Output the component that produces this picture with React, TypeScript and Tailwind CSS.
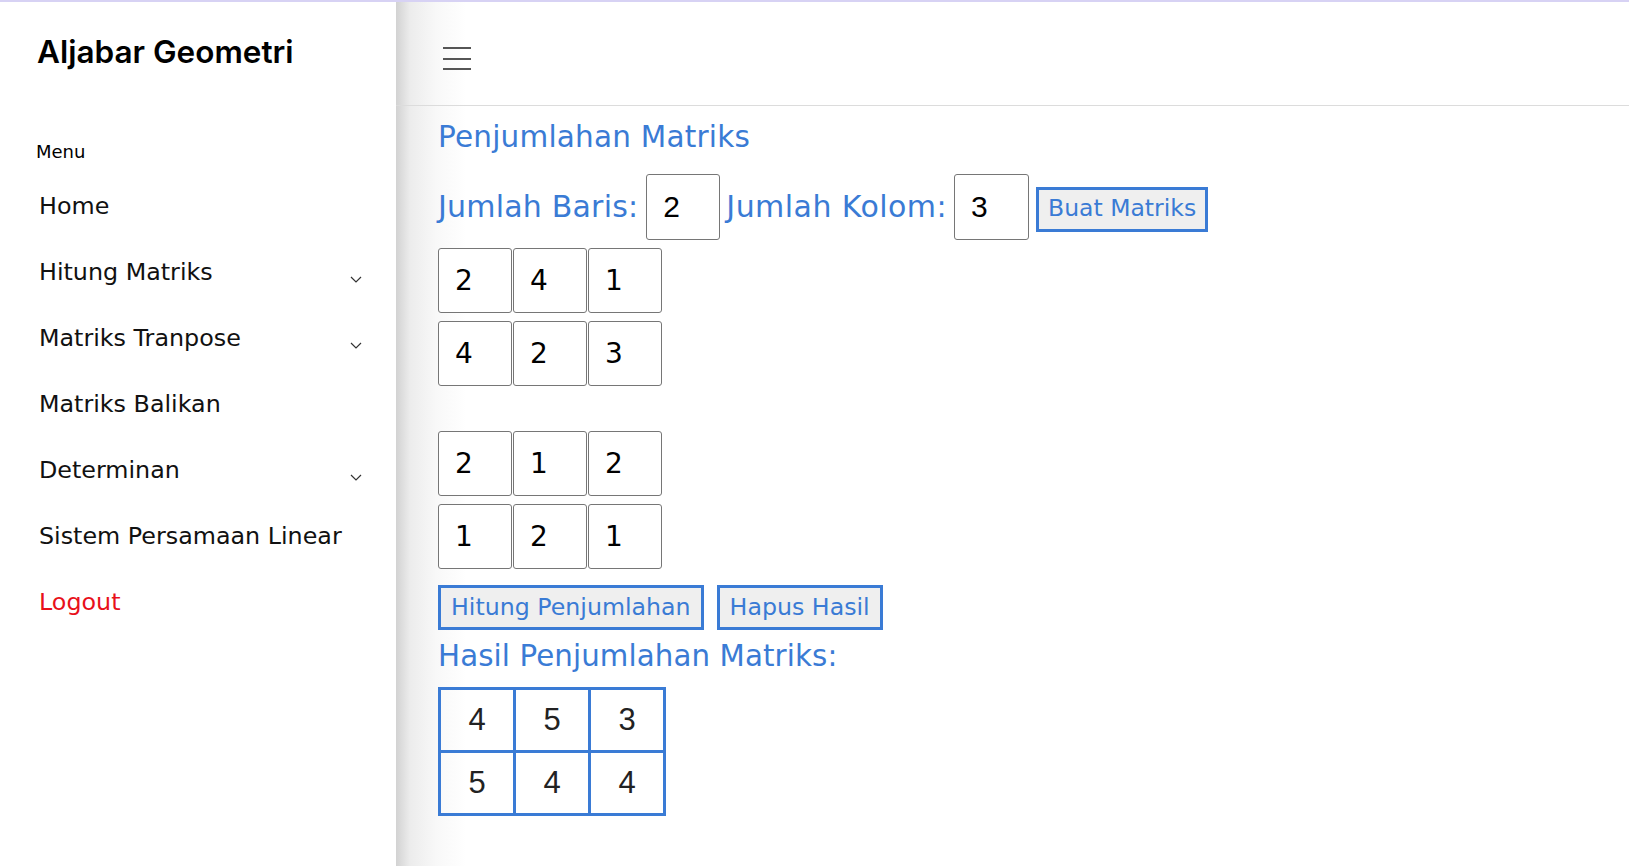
import { useState } from 'react';

const menu = [
  { label: 'Home', sub: false },
  { label: 'Hitung Matriks', sub: true },
  { label: 'Matriks Tranpose', sub: true },
  { label: 'Matriks Balikan', sub: false },
  { label: 'Determinan', sub: true },
  { label: 'Sistem Persamaan Linear', sub: false },
];

function Chevron() {
  return (
    <svg width="12" height="7" viewBox="0 0 12 7" className="mt-[12px]">
      <polyline points="1,1 6,6 11,1" fill="none" stroke="#333" strokeWidth="1.2" />
    </svg>
  );
}

function MatrixInput({ values }: { values: string[][] }) {
  return (
    <div className="flex flex-col gap-[8px]">
      {values.map((row, i) => (
        <div key={i} className="flex gap-[1px]">
          {row.map((v, j) => (
            <input
              key={j}
              defaultValue={v}
              className="w-[74px] h-[65px] border border-[#767676] rounded-[3px] pl-[16px] text-[28px] text-black bg-white font-['DejaVu_Sans',sans-serif] outline-none"
            />
          ))}
        </div>
      ))}
    </div>
  );
}

export default function App() {
  const [rows] = useState('2');
  const [cols] = useState('3');
  const a = [['2', '4', '1'], ['4', '2', '3']];
  const b = [['2', '1', '2'], ['1', '2', '1']];
  const hasil = [['4', '5', '3'], ['5', '4', '4']];

  return (
    <div className="h-screen flex border-t-2 border-[#d7d2f4] font-['DejaVu_Sans',sans-serif] overflow-hidden">
      <aside className="w-[396px] shrink-0 bg-white">
        <h1 className="pl-[37px] pt-[30px] text-[31.5px] leading-[40px] font-semibold text-black font-['Inter',sans-serif]">
          Aljabar Geometri
        </h1>
        <p className="pl-[36px] mt-[68px] text-[18px] leading-[24px] text-black">Menu</p>
        <nav className="mt-[10px]">
          {menu.map((m) => (
            <div key={m.label} className="h-[66px] flex items-center justify-between pl-[39px] pr-[34px]">
              <span className="text-[23.8px] text-[#111]">{m.label}</span>
              {m.sub && <Chevron />}
            </div>
          ))}
          <div className="h-[66px] flex items-center pl-[39px]">
            <span className="text-[23.8px] text-[#e8101a]">Logout</span>
          </div>
        </nav>
      </aside>

      <main className="flex-1 bg-[linear-gradient(to_right,#d2d2d2,#ececec_14px,#f8f8f8_40px,#ffffff_70px)]">
        <header className="h-[104px] border-b border-[#dcdcdc] flex items-center pl-[47px]">
          <div className="flex flex-col gap-[8.5px] mt-[10px]">
            <span className="block w-[28px] h-[2px] bg-[#555]" />
            <span className="block w-[28px] h-[2px] bg-[#555]" />
            <span className="block w-[28px] h-[2px] bg-[#555]" />
          </div>
        </header>

        <section className="pl-[42px] pt-[11px] text-[#3a7bd5]">
          <h2 className="text-[29.5px] leading-[40px] tracking-[0.2px]">Penjumlahan Matriks</h2>

          <div className="mt-[17px] flex items-center gap-[6px]">
            <span className="mr-[2px] text-[30px] leading-[40px] tracking-[0.2px]">Jumlah Baris:</span>
            <input
              defaultValue={rows}
              className="w-[74px] h-[66px] border border-[#767676] rounded-[3px] pl-[16px] text-[30px] text-black font-['Liberation_Sans',sans-serif] bg-white outline-none"
            />
            <span className="mr-[1px] text-[30px] leading-[40px] tracking-[0.45px]">Jumlah Kolom:</span>
            <input
              defaultValue={cols}
              className="w-[75px] h-[66px] border border-[#767676] rounded-[3px] pl-[16px] text-[30px] text-black font-['Liberation_Sans',sans-serif] bg-white outline-none"
            />
            <button className="ml-[1px] mt-[4px] h-[45px] px-[9px] border-[3px] border-[#3a7bd5] bg-[#efefef] text-[23.5px] text-[#3a7bd5]">
              Buat Matriks
            </button>
          </div>

          <div className="mt-[8px]">
            <MatrixInput values={a} />
          </div>
          <div className="mt-[45px]">
            <MatrixInput values={b} />
          </div>

          <div className="mt-[16px] flex gap-[13px]">
            <button className="h-[45px] px-[10px] border-[3px] border-[#3a7bd5] bg-[#efefef] text-[23.7px] text-[#3a7bd5]">
              Hitung Penjumlahan
            </button>
            <button className="h-[45px] px-[10px] border-[3px] border-[#3a7bd5] bg-[#efefef] text-[23.7px] text-[#3a7bd5]">
              Hapus Hasil
            </button>
          </div>

          <h3 className="mt-[6px] text-[29.3px] leading-[40px] tracking-[0.1px]">Hasil Penjumlahan Matriks:</h3>

          <table className="mt-[11px] border-collapse border-[3px] border-[#3a7bd5]">
            <tbody>
              {hasil.map((row, i) => (
                <tr key={i}>
                  {row.map((v, j) => (
                    <td
                      key={j}
                      className="w-[75px] h-[63px] border-[3px] border-[#3a7bd5] text-center text-[31px] text-[#222] font-['Liberation_Sans',sans-serif]"
                    >
                      {v}
                    </td>
                  ))}
                </tr>
              ))}
            </tbody>
          </table>
        </section>
      </main>
    </div>
  );
}
